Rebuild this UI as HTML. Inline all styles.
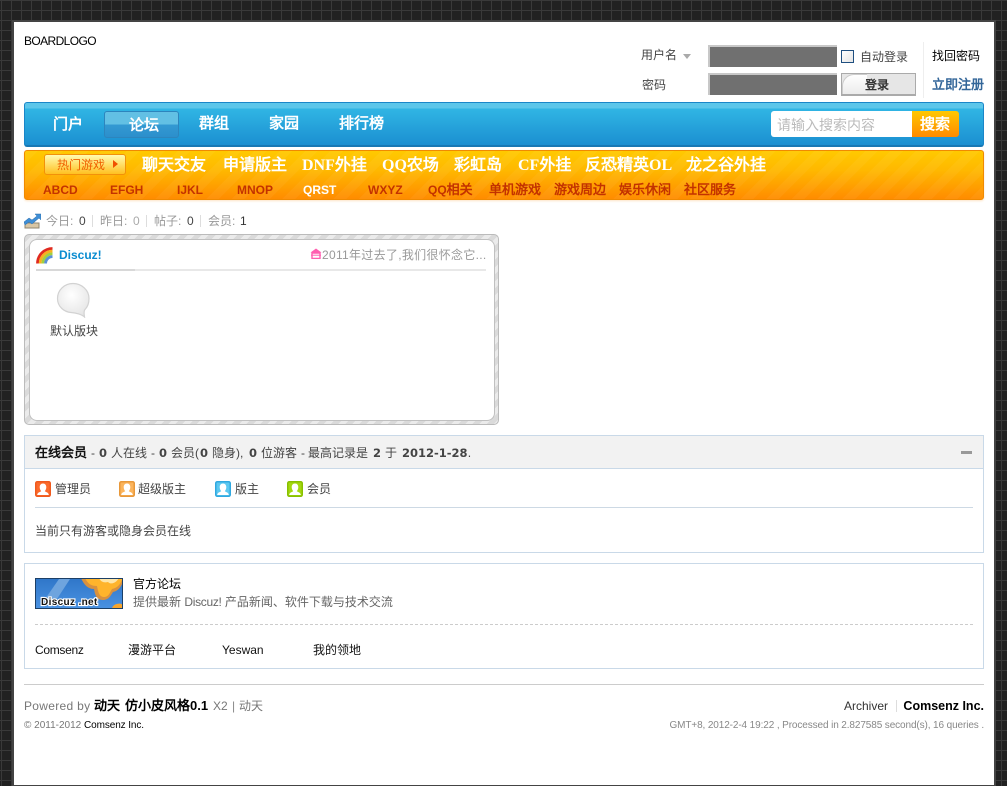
<!DOCTYPE html>
<html lang="zh-CN">
<head>
<meta charset="utf-8">
<title>Discuz!</title>
<style>
*{box-sizing:border-box}
html,body{margin:0;padding:0;width:1007px;height:786px;overflow:hidden}
body{position:relative;background-color:#212121;
background-image:linear-gradient(to right,#393939 1px,transparent 1px),linear-gradient(to bottom,#393939 1px,transparent 1px);
background-size:10px 10px;background-position:1px 0;
font:12px/16px "Liberation Sans","WenQuanYi Zen Hei",sans-serif;color:#444}
.a{position:absolute}
.t{position:absolute;white-space:nowrap;line-height:16px}
b{font-weight:bold}
.nav{font-size:15px;font-weight:bold;color:#fff;font-family:"Liberation Serif","WenQuanYi Zen Hei",serif}
.r1{font-size:16px;font-weight:bold;color:#fff;font-family:"Liberation Serif","WenQuanYi Zen Hei",serif}
.r2{font-size:13px;font-weight:bold;color:#c33200;font-family:"Liberation Sans","WenQuanYi Zen Hei",sans-serif}
.r2l{font-size:12px;font-weight:bold;color:#c33200;font-family:"Liberation Sans",sans-serif}
.g{color:#999}
.d{font-family:"DejaVu Sans",sans-serif;font-weight:bold;font-size:11.5px;color:#444}
.inp{position:absolute;left:708px;width:129px;height:22px;background:#707070;border-top:2px solid #c8c8c8;border-left:2px solid #c8c8c8}
.u{position:absolute;top:481px;width:16px;height:16px}
</style>
</head>
<body>
<div class="a" style="left:12px;top:20px;width:984px;height:767px;background:#fff;border:2px solid #444"></div>

<div class="t" style="left:24px;top:33px;color:#000;letter-spacing:-.6px">BOARDLOGO</div>

<div class="t" style="left:641px;top:47px">用户名</div>
<div class="a" style="left:683px;top:54px;width:0;height:0;border:4px solid transparent;border-top:5px solid #aaa;border-bottom:0"></div>
<div class="inp" style="top:45px"></div>
<div class="a" style="left:841px;top:50px;width:13px;height:13px;border:1px solid #1f4f80;background:linear-gradient(135deg,#fff,#e4e4e4)"></div>
<div class="t" style="left:860px;top:49px">自动登录</div>
<div class="a" style="left:923px;top:42px;width:1px;height:56px;background:#eee"></div>
<div class="t" style="left:932px;top:48px;color:#000">找回密码</div>
<div class="t" style="left:642px;top:77px">密码</div>
<div class="inp" style="top:73px"></div>
<div class="a" style="left:841px;top:73px;width:75px;height:23px;background:#e6e6e6;border:1px solid #aaa;border-bottom-width:2px;overflow:hidden">
  <div class="a" style="left:0;top:0;width:25px;height:20px;background:linear-gradient(to bottom,#fff,#ececec);border-radius:12px 0 0 0;border-left:1px solid #ccc;border-top:1px solid #ccc"></div>
</div>
<div class="t" style="left:865px;top:77px;color:#333;font-weight:bold">登录</div>
<div class="t" style="left:932px;top:77px;color:#336699;font-weight:bold;font-size:13px">立即注册</div>

<!-- nav -->
<div class="a" style="left:24px;top:102px;width:960px;height:45px;border:1px solid #1a86c8;border-bottom:2px solid #1878b4;border-radius:3px;background:linear-gradient(to bottom,#5cc6ea 0,#5cc6ea 5px,#30b5e4 6px,#1b8fd1 100%)"></div>
<div class="a" style="left:104px;top:111px;width:75px;height:27px;border:1px solid #2d85bd;border-radius:3px;background:linear-gradient(to bottom,#62c0e4 0,#62c0e4 12px,#3399d2 13px,#2c8fcc 100%)"></div>
<div class="t nav" style="left:53px;top:117px">门户</div>
<div class="t nav" style="left:129px;top:118px">论坛</div>
<div class="t nav" style="left:199px;top:116px">群组</div>
<div class="t nav" style="left:269px;top:116px">家园</div>
<div class="t nav" style="left:339px;top:116px">排行榜</div>
<div class="a" style="left:771px;top:111px;width:141px;height:26px;background:#fff;border-radius:3px 0 0 3px"></div>
<div class="t" style="left:777px;top:117px;font-size:14px;color:#bbb">请输入搜索内容</div>
<div class="a" style="left:912px;top:111px;width:47px;height:26px;border-radius:0 3px 3px 0;background:linear-gradient(to bottom,#ffc800,#ff8a00)"></div>
<div class="t nav" style="left:920px;top:117px">搜索</div>

<!-- orange bar -->
<div class="a" style="left:24px;top:150px;width:960px;height:50px;border:1px solid #f08a00;border-radius:3px;box-shadow:0 1px 2px #fde3c4;background:repeating-linear-gradient(135deg,rgba(255,255,255,.045) 0,rgba(255,255,255,.045) 9px,rgba(255,255,255,0) 9px,rgba(255,255,255,0) 18px),linear-gradient(to bottom,#ffc900 0,#ffb800 40%,#ff8c00 100%)"></div>
<div class="a" style="left:44px;top:154px;width:82px;height:21px;border:1px solid #f2910a;border-radius:3px;background:linear-gradient(to bottom,#fffbb0,#ffc020)"></div>
<div class="t" style="left:57px;top:157px;color:#f06000">热门游戏</div>
<div class="a" style="left:113px;top:160px;width:0;height:0;border:4px solid transparent;border-left:5px solid #f05000;border-right:0"></div>
<div class="t r1" style="left:142px;top:158px">聊天交友</div>
<div class="t r1" style="left:223px;top:158px">申请版主</div>
<div class="t r1" style="left:302px;top:158px">DNF外挂</div>
<div class="t r1" style="left:382px;top:158px">QQ农场</div>
<div class="t r1" style="left:454px;top:158px">彩虹岛</div>
<div class="t r1" style="left:518px;top:158px">CF外挂</div>
<div class="t r1" style="left:585px;top:158px">反恐精英OL</div>
<div class="t r1" style="left:686px;top:158px">龙之谷外挂</div>
<div class="t r2l" style="left:43px;top:182px">ABCD</div>
<div class="t r2l" style="left:110px;top:182px">EFGH</div>
<div class="t r2l" style="left:177px;top:182px">IJKL</div>
<div class="t r2l" style="left:237px;top:182px">MNOP</div>
<div class="t r2l" style="left:303px;top:182px;color:#fff">QRST</div>
<div class="t r2l" style="left:368px;top:182px">WXYZ</div>
<div class="t r2" style="left:428px;top:182px"><span style="font-size:12px">QQ</span>相关</div>
<div class="t r2" style="left:489px;top:182px">单机游戏</div>
<div class="t r2" style="left:554px;top:182px">游戏周边</div>
<div class="t r2" style="left:619px;top:182px">娱乐休闲</div>
<div class="t r2" style="left:684px;top:182px">社区服务</div>

<!-- stats -->
<svg class="a" style="left:24px;top:213px" width="17" height="16" viewBox="0 0 17 16">
  <path d="M1 10h14v5H1z" fill="#d9c6a4" stroke="#8f8570" stroke-width="1"/>
  <path d="M0 9l5-4 3 2 5-4-2-2h6v6l-2-2-7 6-3-2-4 3z" fill="#3f8ed6" stroke="#2a6ca8" stroke-width=".5"/>
</svg>
<div class="t g" style="left:46px;top:213px">今日:</div><div class="t" style="left:79px;top:213px;color:#444">0</div>
<div class="a" style="left:92px;top:215px;width:1px;height:12px;background:#ddd"></div>
<div class="t g" style="left:100px;top:213px">昨日:</div><div class="t" style="left:133px;top:213px;color:#aaa">0</div>
<div class="a" style="left:146px;top:215px;width:1px;height:12px;background:#ddd"></div>
<div class="t g" style="left:154px;top:213px">帖子:</div><div class="t" style="left:187px;top:213px;color:#444">0</div>
<div class="a" style="left:200px;top:215px;width:1px;height:12px;background:#ddd"></div>
<div class="t g" style="left:208px;top:213px">会员:</div><div class="t" style="left:240px;top:213px;color:#333">1</div>

<!-- forum panel -->
<div class="a" style="left:24px;top:234px;width:475px;height:191px;border:1px solid #bbb;border-radius:5px;background:repeating-linear-gradient(135deg,#dadada 0,#dadada 5px,#ebebeb 5px,#ebebeb 10px)"></div>
<div class="a" style="left:29px;top:239px;width:466px;height:182px;border:1px solid #c0c0c0;border-radius:8px;background:#fff"></div>
<svg class="a" style="left:36px;top:247px" width="17" height="17" viewBox="0 0 17 17" fill="none">
  <path d="M1.500 16.500A15 15 0 0 1 16.500 1.500" stroke="#e02a20" stroke-width="2.800"/>
  <path d="M4.200 16.500A12.300 12.300 0 0 1 16.500 4.200" stroke="#f7b020" stroke-width="2.800"/>
  <path d="M6.900 16.500A9.600 9.600 0 0 1 16.500 6.900" stroke="#a0d040" stroke-width="2.800"/>
  <path d="M9.600 16.500A6.900 6.900 0 0 1 16.500 9.600" stroke="#5a90d8" stroke-width="2.800"/>
</svg>
<div class="t" style="left:59px;top:247px;font-weight:bold;color:#0a8cd0">Discuz!</div>
<svg class="a" style="left:310px;top:248px" width="12" height="11" viewBox="0 0 12 11">
  <path d="M6 .5L11.500 4.500H.5z" fill="#ff5fb0"/><path d="M2 5h8v5.500H2z" fill="none" stroke="#ff5fb0" stroke-width="1.400"/><path d="M1 7.200h10" stroke="#ff5fb0"/>
</svg>
<div class="t g" style="left:322px;top:247px;letter-spacing:.3px">2011年过去了,我们很怀念它...</div>
<div class="a" style="left:36px;top:269px;width:450px;height:2px;background:#e8e8e8"></div>
<div class="a" style="left:36px;top:269px;width:99px;height:2px;background:#d8d8d8"></div>
<svg class="a" style="left:56px;top:282px" width="35" height="36" viewBox="0 0 35 36">
  <defs><radialGradient id="bb" cx=".45" cy=".35" r=".7"><stop offset="0" stop-color="#fff"/><stop offset="1" stop-color="#e4e4e4"/></radialGradient></defs>
  <path d="M17 1.500C8.500 1.500 1.500 8 1.500 16.500S8.500 30 15 30.500c5 .3 11 2 13.500 4.500C28 32 28 28.500 29 27.500 31.500 25 33 21 33 16.500 33 8 25.500 1.500 17 1.500Z" fill="url(#bb)" stroke="#d2d2d2" stroke-width="1.200"/>
</svg>
<div class="t" style="left:50px;top:323px">默认版块</div>

<!-- online -->
<div class="a" style="left:24px;top:435px;width:960px;height:118px;border:1px solid #c9d9e8;background:#fff"></div>
<div class="a" style="left:25px;top:436px;width:958px;height:33px;background:#f2f2f2;border-bottom:1px solid #c9d9e8"></div>
<div class="t" style="left:35px;top:445px;color:#111;font-weight:bold;font-size:13px">在线会员</div>
<div class="t" style="left:91px;top:445px">-</div>
<div class="t d" style="left:99px;top:445px">0</div>
<div class="t" style="left:111px;top:445px">人在线</div>
<div class="t" style="left:151px;top:445px">-</div>
<div class="t d" style="left:159px;top:445px">0</div>
<div class="t" style="left:171px;top:445px">会员(</div>
<div class="t d" style="left:200px;top:445px">0</div>
<div class="t" style="left:212px;top:445px">隐身),</div>
<div class="t d" style="left:249px;top:445px">0</div>
<div class="t" style="left:261px;top:445px">位游客</div>
<div class="t" style="left:301px;top:445px">-</div>
<div class="t" style="left:308px;top:445px">最高记录是</div>
<div class="t d" style="left:373px;top:445px">2</div>
<div class="t" style="left:385px;top:445px">于</div>
<div class="t d" style="left:402px;top:445px">2012-1-28<span style="font-weight:normal">.</span></div>
<div class="a" style="left:961px;top:451px;width:11px;height:3px;background:#999"></div>

<svg class="u" style="left:35px" viewBox="0 0 16 16"><rect x=".75" y=".75" width="14.500" height="14.500" rx="1.500" fill="#fb6a2c" stroke="#ef5a1e" stroke-width="1.500"/><path d="M8 2.500c2.200 0 3.300 1.600 3.300 3.800 0 1.700-.9 3.200-1.500 3.900.8.700 4 1.200 4 3.800H2.200c0-2.600 3.200-3.100 4-3.800-.6-.7-1.500-2.200-1.500-3.900C4.700 4.100 5.800 2.500 8 2.500Z" fill="#fff"/></svg>
<div class="t" style="left:55px;top:481px">管理员</div>
<svg class="u" style="left:119px" viewBox="0 0 16 16"><rect x=".75" y=".75" width="14.500" height="14.500" rx="1.500" fill="#fbb45c" stroke="#e8983a" stroke-width="1.500"/><path d="M8 2.500c2.200 0 3.300 1.600 3.300 3.800 0 1.700-.9 3.200-1.500 3.900.8.700 4 1.200 4 3.800H2.200c0-2.600 3.200-3.100 4-3.800-.6-.7-1.500-2.200-1.500-3.900C4.700 4.100 5.800 2.500 8 2.500Z" fill="#fff"/></svg>
<div class="t" style="left:138px;top:481px">超级版主</div>
<svg class="u" style="left:215px" viewBox="0 0 16 16"><rect x=".75" y=".75" width="14.500" height="14.500" rx="1.500" fill="#5cc8f0" stroke="#30a8e0" stroke-width="1.500"/><path d="M8 2.500c2.200 0 3.300 1.600 3.300 3.800 0 1.700-.9 3.200-1.500 3.900.8.700 4 1.200 4 3.800H2.200c0-2.600 3.200-3.100 4-3.800-.6-.7-1.500-2.200-1.500-3.900C4.700 4.100 5.800 2.500 8 2.500Z" fill="#fff"/></svg>
<div class="t" style="left:235px;top:481px">版主</div>
<svg class="u" style="left:287px" viewBox="0 0 16 16"><rect x=".75" y=".75" width="14.500" height="14.500" rx="1.500" fill="#a4d810" stroke="#88c000" stroke-width="1.500"/><path d="M8 2.500c2.200 0 3.300 1.600 3.300 3.800 0 1.700-.9 3.200-1.500 3.900.8.700 4 1.200 4 3.800H2.200c0-2.600 3.200-3.100 4-3.800-.6-.7-1.500-2.200-1.500-3.900C4.700 4.100 5.800 2.500 8 2.500Z" fill="#fff"/></svg>
<div class="t" style="left:307px;top:481px">会员</div>
<div class="a" style="left:35px;top:507px;width:938px;height:1px;background:#cdd9e4"></div>
<div class="t" style="left:35px;top:523px">当前只有游客或隐身会员在线</div>

<!-- links -->
<div class="a" style="left:24px;top:563px;width:960px;height:106px;border:1px solid #c9d9e8"></div>
<svg class="a" style="left:35px;top:578px" width="88" height="31" viewBox="0 0 88 31">
  <defs><linearGradient id="lg" x1="0" y1="0" x2="0" y2="1"><stop offset="0" stop-color="#2f76c8"/><stop offset="1" stop-color="#4a92e2"/></linearGradient></defs>
  <rect width="88" height="31" fill="url(#lg)"/>
  <path d="M8 24L24 1h11L20 24z" fill="#6ea4de"/>
  <path d="M46 0c3 7 7 11 13 11 1 5 2 11 9 11 6 0 8-5 10-8 5-1 8-5 10-10V0z" fill="#d8913f"/>
  <path d="M50 0c3 6 6 8 12 8 1 5 2 11 7 11 5 0 6-5 8-8 5-1 8-4 10-9V0z" fill="#ffb42c"/>
  <path d="M64 0c2 4 5 5 9 4 3 3 8 1 11-4z" fill="#ffe6a8"/>
  <path d="M77 31c0-6 11-7 11-3v3z" fill="#f7a52c"/>
  <rect x=".5" y=".5" width="87" height="30" fill="none" stroke="#1c3f66"/>
  <text x="6" y="27" font-family="Liberation Sans,sans-serif" font-size="10" font-weight="bold" fill="#111" stroke="#fff" stroke-width="2.200" paint-order="stroke" letter-spacing=".35">Discuz .net</text>
</svg>
<div class="t" style="left:133px;top:576px;color:#000">官方论坛</div>
<div class="t" style="left:133px;top:594px;color:#666">提供最新 <span style="letter-spacing:-.3px">Discuz!</span> 产品新闻、软件下载与技术交流</div>
<div class="a" style="left:35px;top:624px;width:938px;border-top:1px dashed #ccc"></div>
<div class="t" style="left:35px;top:642px;color:#111;letter-spacing:-.3px">Comsenz</div>
<div class="t" style="left:128px;top:642px;color:#111">漫游平台</div>
<div class="t" style="left:222px;top:642px;color:#111">Yeswan</div>
<div class="t" style="left:313px;top:642px;color:#111">我的领地</div>

<!-- footer -->
<div class="a" style="left:24px;top:684px;width:960px;height:1px;background:#ccc"></div>
<div class="t" style="left:24px;top:698px;color:#777;letter-spacing:.3px">Powered by</div>
<div class="t" style="left:94px;top:698px;color:#000;font-weight:bold;font-size:13px">动天</div>
<div class="t" style="left:125px;top:698px;color:#000;font-weight:bold;font-size:13px">仿小皮风格0.1</div>
<div class="t" style="left:213px;top:698px;color:#777">X2</div>
<div class="t" style="left:232px;top:698px;color:#888">|</div>
<div class="t" style="left:239px;top:698px;color:#777">动天</div>
<div class="t" style="left:844px;top:698px;color:#333">Archiver</div>
<div class="a" style="left:896px;top:700px;width:1px;height:12px;background:#ddd"></div>
<div class="t" style="right:23px;top:698px;color:#000;font-weight:bold;font-size:12.5px">Comsenz Inc.</div>
<div class="t" style="left:24px;top:718px;font-size:10px;color:#777">© 2011-2012 <span style="color:#000;letter-spacing:-.1px">Comsenz Inc.</span></div>
<div class="t" style="right:23px;top:718px;font-size:10px;color:#888;letter-spacing:-.11px">GMT+8, 2012-2-4 19:22 , Processed in 2.827585 second(s), 16 queries .</div>
</body>
</html>
